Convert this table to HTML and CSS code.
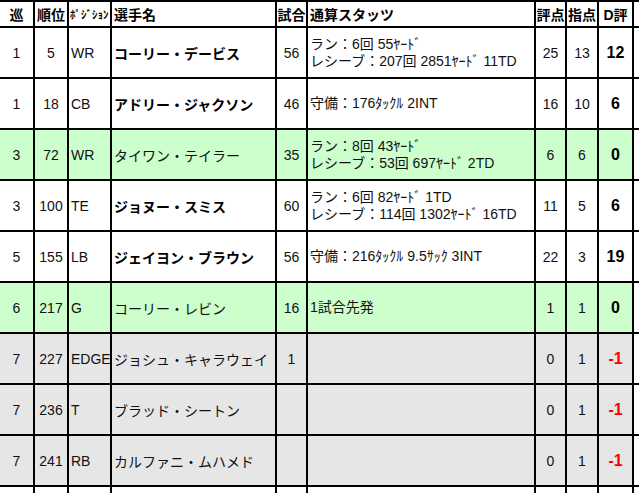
FILE: index.html
```html
<!DOCTYPE html>
<html lang="ja">
<head>
<meta charset="utf-8">
<title>ドラフト評価</title>
<link rel="stylesheet" href="styles.css">
</head>
<body>
<div class="sheet">
  <div class="c h ctr">巡</div>
  <div class="c h ctr">順位</div>
  <div class="c h pos">ﾎﾟｼﾞｼｮﾝ</div>
  <div class="c h">選手名</div>
  <div class="c h ctr">試合</div>
  <div class="c h">通算スタッツ</div>
  <div class="c h ctr">評点</div>
  <div class="c h ctr">指点</div>
  <div class="c h ctr">D評</div>
  <div class="c h x"></div>

  <div class="c ctr">1</div><div class="c ctr">5</div><div class="c">WR</div><div class="c b">コーリー・デービス</div><div class="c ctr">56</div>
  <div class="c st"><span>ラン：6回 55ﾔｰﾄﾞ</span><span>レシーブ：207回 2851ﾔｰﾄﾞ 11TD</span></div>
  <div class="c ctr">25</div><div class="c ctr">13</div><div class="c ctr d">12</div><div class="c x"></div>

  <div class="c ctr">1</div><div class="c ctr">18</div><div class="c">CB</div><div class="c b">アドリー・ジャクソン</div><div class="c ctr">46</div>
  <div class="c st"><span>守備：176ﾀｯｸﾙ 2INT</span></div>
  <div class="c ctr">16</div><div class="c ctr">10</div><div class="c ctr d">6</div><div class="c x"></div>

  <div class="c g ctr">3</div><div class="c g ctr">72</div><div class="c g">WR</div><div class="c g">タイワン・テイラー</div><div class="c g ctr">35</div>
  <div class="c g st"><span>ラン：8回 43ﾔｰﾄﾞ</span><span>レシーブ：53回 697ﾔｰﾄﾞ 2TD</span></div>
  <div class="c g ctr">6</div><div class="c g ctr">6</div><div class="c g ctr d">0</div><div class="c x"></div>

  <div class="c ctr">3</div><div class="c ctr">100</div><div class="c">TE</div><div class="c b">ジョヌー・スミス</div><div class="c ctr">60</div>
  <div class="c st"><span>ラン：6回 82ﾔｰﾄﾞ 1TD</span><span>レシーブ：114回 1302ﾔｰﾄﾞ 16TD</span></div>
  <div class="c ctr">11</div><div class="c ctr">5</div><div class="c ctr d">6</div><div class="c x"></div>

  <div class="c ctr">5</div><div class="c ctr">155</div><div class="c">LB</div><div class="c b">ジェイヨン・ブラウン</div><div class="c ctr">56</div>
  <div class="c st"><span>守備：216ﾀｯｸﾙ 9.5ｻｯｸ 3INT</span></div>
  <div class="c ctr">22</div><div class="c ctr">3</div><div class="c ctr d">19</div><div class="c x"></div>

  <div class="c g ctr">6</div><div class="c g ctr">217</div><div class="c g">G</div><div class="c g">コーリー・レビン</div><div class="c g ctr">16</div>
  <div class="c g st"><span>1試合先発</span></div>
  <div class="c g ctr">1</div><div class="c g ctr">1</div><div class="c g ctr d">0</div><div class="c x"></div>

  <div class="c n ctr">7</div><div class="c n ctr">227</div><div class="c n">EDGE</div><div class="c n">ジョシュ・キャラウェイ</div><div class="c n ctr">1</div>
  <div class="c n st"></div>
  <div class="c n ctr">0</div><div class="c n ctr">1</div><div class="c n ctr d red">-1</div><div class="c x"></div>

  <div class="c n ctr">7</div><div class="c n ctr">236</div><div class="c n">T</div><div class="c n">ブラッド・シートン</div><div class="c n ctr"></div>
  <div class="c n st"></div>
  <div class="c n ctr">0</div><div class="c n ctr">1</div><div class="c n ctr d red">-1</div><div class="c x"></div>

  <div class="c n ctr">7</div><div class="c n ctr">241</div><div class="c n">RB</div><div class="c n">カルファニ・ムハメド</div><div class="c n ctr"></div>
  <div class="c n st"></div>
  <div class="c n ctr">0</div><div class="c n ctr">1</div><div class="c n ctr d red">-1</div><div class="c x"></div>

  <div class="c"></div><div class="c"></div><div class="c"></div><div class="c"></div><div class="c"></div>
  <div class="c"></div><div class="c"></div><div class="c"></div><div class="c"></div><div class="c x"></div>
</div>
</body>
</html>
```

FILE: styles.css
```css
html, body {
  margin: 0;
  padding: 0;
  background: #ffffff;
}

body {
  width: 639px;
  height: 493px;
  overflow: hidden;
  font-family: "Liberation Sans", "Noto Sans CJK JP", sans-serif;
  font-size: 14px;
  color: #111111;
}

.sheet {
  display: grid;
  grid-template-columns: 35px 34px 43px 165px 31px 228px 31px 32px 35px 1fr;
  grid-template-rows: 26px;
  grid-auto-rows: 51px;
  border-top: 2px solid #000;
}

.c {
  box-sizing: border-box;
  border-right: 2px solid #000;
  border-bottom: 2px solid #000;
  display: flex;
  align-items: center;
  padding-left: 2px;
  white-space: nowrap;
  overflow: hidden;
  background: #ffffff;
}

.c.x {
  border-right: none;
  background: #ffffff;
}

.h {
  font-weight: bold;
  color: #000;
}

.ctr {
  justify-content: center;
  padding-left: 0;
}

.pos {
  font-size: 11px;
  padding-left: 1px;
}

.b {
  font-weight: bold;
  color: #000;
}

.d {
  font-weight: bold;
  font-size: 16px;
  color: #000;
}

.g {
  background: #ccffcc;
}

.n {
  background: #e7e6e6;
}

.d.red {
  color: #ff0000;
}

.st {
  flex-direction: column;
  align-items: flex-start;
  justify-content: center;
  line-height: 17px;
  padding-left: 2px;
}
```
